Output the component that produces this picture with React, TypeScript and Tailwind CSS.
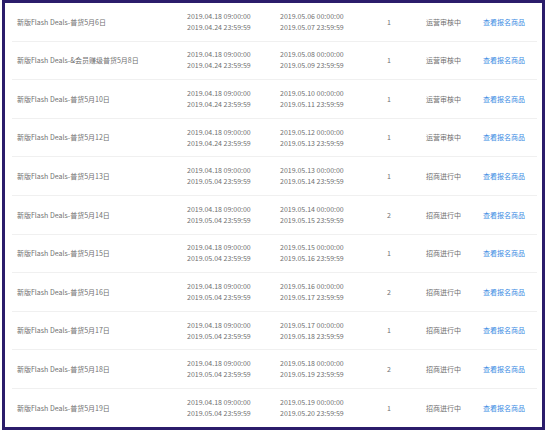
const rows = [
  { name: "新版Flash Deals-普货5月6日", a: ["2019.04.18 09:00:00", "2019.04.24 23:59:59"], b: ["2019.05.06 00:00:00", "2019.05.07 23:59:59"], n: 1, status: "运营审核中" },
  { name: "新版Flash Deals-&会员赚级普货5月8日", a: ["2019.04.18 09:00:00", "2019.04.24 23:59:59"], b: ["2019.05.08 00:00:00", "2019.05.09 23:59:59"], n: 1, status: "运营审核中" },
  { name: "新版Flash Deals-普货5月10日", a: ["2019.04.18 09:00:00", "2019.04.24 23:59:59"], b: ["2019.05.10 00:00:00", "2019.05.11 23:59:59"], n: 1, status: "运营审核中" },
  { name: "新版Flash Deals-普货5月12日", a: ["2019.04.18 09:00:00", "2019.04.24 23:59:59"], b: ["2019.05.12 00:00:00", "2019.05.13 23:59:59"], n: 1, status: "运营审核中" },
  { name: "新版Flash Deals-普货5月13日", a: ["2019.04.18 09:00:00", "2019.05.04 23:59:59"], b: ["2019.05.13 00:00:00", "2019.05.14 23:59:59"], n: 1, status: "招商进行中" },
  { name: "新版Flash Deals-普货5月14日", a: ["2019.04.18 09:00:00", "2019.05.04 23:59:59"], b: ["2019.05.14 00:00:00", "2019.05.15 23:59:59"], n: 2, status: "招商进行中" },
  { name: "新版Flash Deals-普货5月15日", a: ["2019.04.18 09:00:00", "2019.05.04 23:59:59"], b: ["2019.05.15 00:00:00", "2019.05.16 23:59:59"], n: 1, status: "招商进行中" },
  { name: "新版Flash Deals-普货5月16日", a: ["2019.04.18 09:00:00", "2019.05.04 23:59:59"], b: ["2019.05.16 00:00:00", "2019.05.17 23:59:59"], n: 2, status: "招商进行中" },
  { name: "新版Flash Deals-普货5月17日", a: ["2019.04.18 09:00:00", "2019.05.04 23:59:59"], b: ["2019.05.17 00:00:00", "2019.05.18 23:59:59"], n: 1, status: "招商进行中" },
  { name: "新版Flash Deals-普货5月18日", a: ["2019.04.18 09:00:00", "2019.05.04 23:59:59"], b: ["2019.05.18 00:00:00", "2019.05.19 23:59:59"], n: 2, status: "招商进行中" },
  { name: "新版Flash Deals-普货5月19日", a: ["2019.04.18 09:00:00", "2019.05.04 23:59:59"], b: ["2019.05.19 00:00:00", "2019.05.20 23:59:59"], n: 1, status: "招商进行中" },
];

export default function App() {
  return (
    <div className="w-[554px] h-[435px] bg-white pl-[2px] font-['Noto_Sans_CJK_SC',sans-serif] text-[7px] text-[#707070]">
      <div className="w-[543px] h-[430px] border-[3px] border-[#2b1d6b] pl-[7px] pr-[5px]">
        {rows.map((r, i) => (
          <div
            key={i}
            className={`flex items-center h-[38.6px] pl-[5px] ${i < rows.length - 1 ? "border-b border-[#f0f0f0]" : ""}`}
          >
            <div className="w-[170px] whitespace-nowrap">{r.name}</div>
            <div className="w-[93px] leading-[11px]">
              <div>{r.a[0]}</div>
              <div>{r.a[1]}</div>
            </div>
            <div className="w-[107px] leading-[11px]">
              <div>{r.b[0]}</div>
              <div>{r.b[1]}</div>
            </div>
            <div className="w-[39px]">{r.n}</div>
            <div className="w-[57px]">{r.status}</div>
            <div className="text-[#3b8ce3]">查看报名商品</div>
          </div>
        ))}
      </div>
    </div>
  );
}
